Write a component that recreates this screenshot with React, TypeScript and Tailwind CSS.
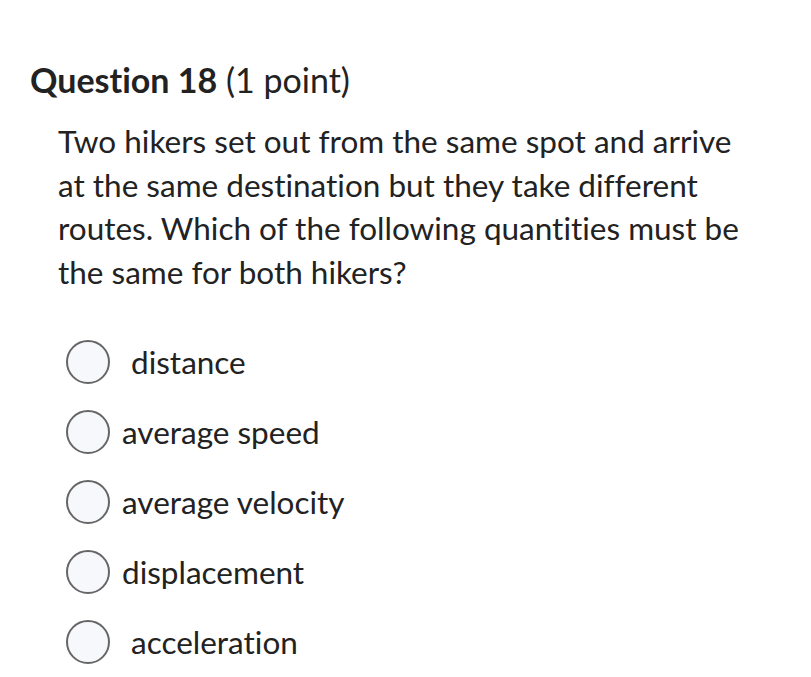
const options = [
  { label: "distance", indent: true },
  { label: "average speed", indent: false },
  { label: "average velocity", indent: false },
  { label: "displacement", indent: false },
  { label: "acceleration", indent: true },
];

export default function App() {
  return (
    <div className="min-h-screen bg-white text-[#222] font-['Lato',sans-serif] [font-variant-ligatures:none]">
      <div className="pl-[30px] pt-[56px]">
        <h2 className="text-[34px] leading-[48px]">
          <span className="font-bold">Question 18</span> (1 point)
        </h2>
        <p className="mt-[16px] ml-[28px] w-[700px] text-[31.5px] leading-[43.5px]">
          Two hikers set out from the same spot and arrive at the same destination but they take different
          routes. Which of the following quantities must be the same for both hikers?
        </p>
        <ul className="mt-[46px] ml-[36px] flex flex-col gap-[26px]">
          {options.map((o) => (
            <li key={o.label} className="flex items-center h-[44px]">
              <span className="w-[44px] h-[44px] rounded-full border-2 border-[#666] bg-[#f7f8fb] shrink-0" />
              <span className={`${o.indent ? "ml-[21px]" : "ml-[12px]"} text-[31.5px] leading-[44px]`}>{o.label}</span>
            </li>
          ))}
        </ul>
      </div>
    </div>
  );
}
